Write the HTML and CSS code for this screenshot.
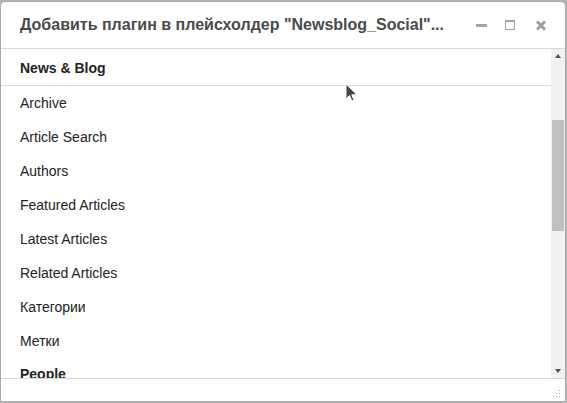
FILE: index.html
```html
<!DOCTYPE html>
<html>
<head>
<meta charset="utf-8">
<link rel="stylesheet" href="styles.css">
</head>
<body>
<div class="dialog">
  <div class="header">
    <div class="title">Добавить плагин в плейсхолдер "Newsblog_Social"...</div>
    <div class="controls">
      <span class="ctl min"></span>
      <span class="ctl max"></span>
      <svg class="ctl close" width="12" height="11" viewBox="0 0 12 11"><path d="M2 1.5 L10 9.5 M10 1.5 L2 9.5" stroke="#9a9a9a" stroke-width="2.6"/></svg>
    </div>
  </div>
  <div class="body">
    <div class="list">
      <div class="group">News &amp; Blog</div>
      <div class="item">Archive</div>
      <div class="item">Article Search</div>
      <div class="item">Authors</div>
      <div class="item">Featured Articles</div>
      <div class="item">Latest Articles</div>
      <div class="item">Related Articles</div>
      <div class="item">Категории</div>
      <div class="item">Метки</div>
      <div class="group people">People</div>
    </div>
    <div class="scrollbar">
      <div class="arrow up"></div>
      <div class="track">
        <div class="thumb"></div>
      </div>
      <div class="arrow down"></div>
    </div>
  </div>
  <div class="footer">
    <svg class="grip" width="10" height="10" viewBox="0 0 10 10">
      <rect x="8" y="1" width="1" height="1" fill="#aaa"/>
      <rect x="5" y="4" width="1" height="1" fill="#aaa"/>
      <rect x="8" y="4" width="1" height="1" fill="#aaa"/>
      <rect x="2" y="7" width="1" height="1" fill="#aaa"/>
      <rect x="5" y="7" width="1" height="1" fill="#aaa"/>
      <rect x="8" y="7" width="1" height="1" fill="#aaa"/>
    </svg>
  </div>
  <svg class="cursor" width="14" height="22" viewBox="0 0 14 22"><path d="M1 1 L1 16 L4.5 12.5 L7 18 L9 17 L6.8 11.8 L12 11.8 Z" fill="#444" stroke="#fff" stroke-width="1"/></svg>
</div>
</body>
</html>
```
FILE: styles.css
```css
html, body {
  margin: 0;
  padding: 0;
}
body {
  background: #b4b4b4;
  width: 567px;
  height: 403px;
  overflow: hidden;
  font-family: "Liberation Sans", Arial, sans-serif;
}
.dialog {
  position: relative;
  margin-top: 1px;
  width: 564px;
  height: 399px;
  border: 1px solid #a9a9a9;
  border-radius: 5px 5px 2px 2px;
  background: #fff;
  display: flex;
  flex-direction: column;
  overflow: hidden;
}
.header {
  height: 46px;
  flex: none;
  border-bottom: 1px solid #d7d7d7;
  display: flex;
  align-items: center;
  padding: 0 0 0 19px;
}
.title {
  flex: 1;
  font-size: 16px;
  font-weight: bold;
  color: #4a4a4a;
  white-space: nowrap;
  padding-bottom: 1px;
}
.controls {
  display: flex;
  align-items: center;
  padding-right: 18px;
}
.ctl {
  display: block;
}
.min {
  width: 11px;
  height: 3px;
  background: #a4a4a4;
  margin-right: 18px;
}
.max {
  width: 8px;
  height: 7px;
  border: 1px solid #a4a4a4;
  border-top-width: 2px;
  margin-right: 20px;
}
.body {
  flex: 1;
  display: flex;
  overflow: hidden;
}
.list {
  flex: 1;
  padding-top: 3px;
  overflow: hidden;
}
.group, .item {
  padding-left: 19px;
  font-size: 14px;
  color: #222;
}
.group {
  font-weight: bold;
  height: 33px;
  line-height: 33px;
  border-bottom: 1px solid #dcdcdc;
}
.people {
  border-bottom: none;
}
.item {
  height: 34px;
  line-height: 34px;
}
.scrollbar {
  width: 14px;
  flex: none;
  background: #f1f1f1;
  display: flex;
  flex-direction: column;
}
.arrow {
  height: 14px;
  flex: none;
  display: flex;
  align-items: center;
  justify-content: center;
}
.arrow::before {
  content: "";
  width: 0;
  height: 0;
  border-left: 3.5px solid transparent;
  border-right: 3.5px solid transparent;
}
.up::before {
  border-bottom: 4px solid #505050;
}
.down::before {
  border-top: 4px solid #505050;
}
.track {
  flex: 1;
  padding-top: 57px;
}
.thumb {
  margin: 0 1px 0 1px;
  height: 111px;
  background: #c1c1c1;
}
.footer {
  height: 22px;
  flex: none;
  border-top: 1px solid #d7d7d7;
  display: flex;
  justify-content: flex-end;
  align-items: flex-end;
}
.grip {
  margin: 0 4px 2px 0;
}
.cursor {
  position: absolute;
  left: 344px;
  top: 81px;
}
```
